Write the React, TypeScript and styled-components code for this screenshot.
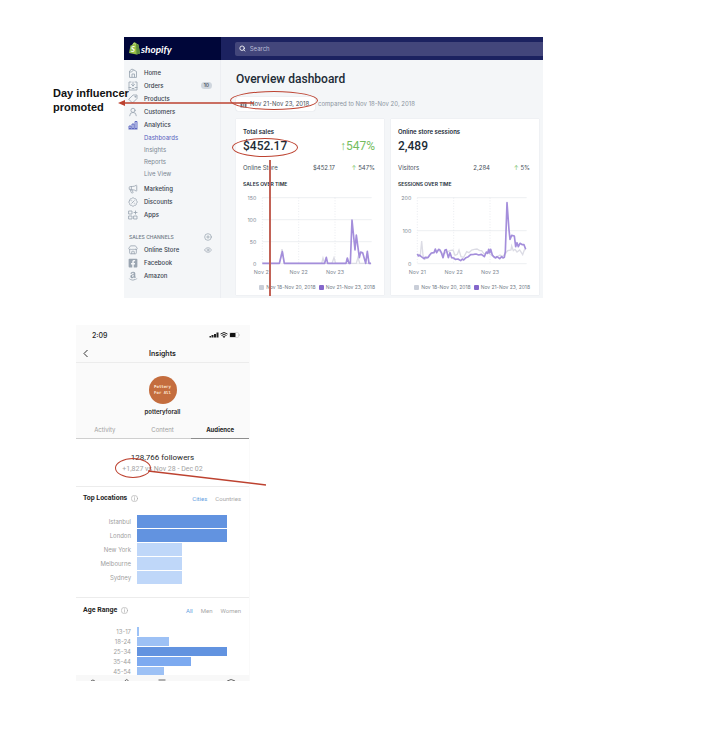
import React from "react";
import styled, { createGlobalStyle } from "styled-components";
import { BadgePercent, CirclePlus, Eye, Megaphone, Search, Store, UserRound } from "lucide-react";
import { FaAmazon, FaFacebookSquare } from "react-icons/fa";

const GlobalStyle = createGlobalStyle`
  *, *::before, *::after { box-sizing: border-box; }
  body { margin: 0; background: #fff; font-family: Inter, "Liberation Sans", sans-serif; }
  button, input { font: inherit; color: inherit; border: 0; background: none; padding: 0; margin: 0; }
  a { color: inherit; text-decoration: none; }
  h1, h2, h3, p, ul { margin: 0; padding: 0; list-style: none; font: inherit; }
`;

const RED = "#bd4230";
const DISPLAY = `Roboto, "Liberation Sans", sans-serif`;

const Page = styled.main`
  display: flex;
  flex-direction: column;
  gap: 27px;
  padding: 37px 0 53px;
`;

const Columns = styled.div<{ $cols: string }>`
  display: grid;
  grid-template-columns: ${(p) => p.$cols};
  align-items: start;
`;

const Callout = styled.p`
  position: relative;
  z-index: 2;
  padding: 49px 0 0 53px;
  font: 700 11px/14px "Liberation Sans", Arial, sans-serif;
  color: #111;
  white-space: nowrap;
`;

/* ---------- annotations ---------- */
const Ring = styled.span<{ $x: number; $y: number; $w: number; $h: number }>`
  position: absolute;
  left: ${(p) => p.$x}px;
  top: ${(p) => p.$y}px;
  width: ${(p) => p.$w}px;
  height: ${(p) => p.$h}px;
  border: 1px solid ${RED};
  border-radius: 50%;
  pointer-events: none;
`;

const Arrow = styled.svg`
  position: absolute;
  left: -118px;
  top: 3px;
  width: 136px;
  height: 6px;
  z-index: 2;
  pointer-events: none;
`;

const DropLine = styled.span`
  position: absolute;
  left: 33px;
  top: 41px;
  bottom: -1px;
  width: 2px;
  background: #c26256;
`;

const Pointer = styled.svg`
  position: absolute;
  left: 26px;
  top: 6px;
  width: 120px;
  height: 18px;
  pointer-events: none;
`;

/* ---------- store admin ---------- */
const Admin = styled.section`
  display: grid;
  grid-template-columns: 97px minmax(0, 1fr);
  background: #f4f6f8;
  color: #212b36;
`;

const Brand = styled.a`
  display: flex;
  align-items: center;
  gap: 1px;
  height: 23px;
  padding-left: 5px;
  background: #000639;
  color: #fff;
  font: italic 700 10px/12px Lato, sans-serif;
`;

const TopBar = styled.header`
  display: flex;
  align-items: center;
  height: 23px;
  padding-left: 14px;
  background: #1c2260;
`;

const SearchBox = styled.label`
  display: flex;
  flex: 1;
  align-items: center;
  gap: 4px;
  height: 14px;
  padding-left: 4px;
  border-radius: 2px 0 0 2px;
  background: #43467b;
  color: #fff;
  font-size: 6px;
  input { width: 100%; outline: 0; }
  input::placeholder { color: #b9bcd6; opacity: 1; }
`;

const Sidebar = styled.nav`
  display: flex;
  flex-direction: column;
  padding: 6px 8px 16px 4px;
  border-right: 1px solid #eceef2;
`;

const NavItem = styled.a`
  display: flex;
  align-items: center;
  gap: 6px;
  height: 13px;
  font-size: 6px;
  font-weight: 500;
  color: #39434e;
  svg { width: 10px; height: 10px; color: #9aa5b1; flex: none; }
`;

const NavEnd = styled.span`
  display: flex;
  margin-left: auto;
  && svg { width: 8px; height: 8px; }
`;

const Count = styled.span`
  margin-left: auto;
  padding: 0 3px;
  border-radius: 4px;
  background: #cfd6de;
  font-size: 5px;
  line-height: 7px;
`;

const SubNav = styled.div`
  display: flex;
  flex-direction: column;
  padding: 1px 0 2px 16px;
`;

const SubItem = styled.a<{ $active?: boolean }>`
  font-size: 6px;
  line-height: 12px;
  color: ${(p) => (p.$active ? "#5560bd" : "#7a8591")};
`;

const NavHeading = styled.div`
  display: flex;
  align-items: center;
  height: 13px;
  margin-top: 9px;
  padding-left: 1px;
  font-size: 5px;
  font-weight: 500;
  color: #6d7884;
  svg { color: #919eab; }
`;

const Body = styled.div`
  display: flex;
  flex-direction: column;
  padding: 11px 4px 1px 15px;
`;

const Title = styled.h1`
  font: 500 12px/16px ${DISPLAY};
`;

const DateRow = styled.div`
  position: relative;
  display: flex;
  align-items: center;
  gap: 3px;
  margin: 10px 0 8px;
  font-size: 6px;
  line-height: 14px;
  color: #8b95a0;
  white-space: nowrap;
`;

const DateButton = styled.button`
  display: flex;
  align-items: center;
  gap: 3px;
  width: 79px;
  height: 14px;
  padding-left: 4px;
  border-radius: 2px;
  background: #fff;
  box-shadow: 0 0 1px #b9c2cc;
  color: #46505b;
  svg { width: 7px; height: 7px; }
`;

const Cards = styled.div`
  display: grid;
  grid-template-columns: repeat(2, minmax(0, 1fr));
  gap: 7px;
`;

const Card = styled.article`
  position: relative;
  padding: 8px 9px 4px 7px;
  background: #fff;
  box-shadow: 0 0 1px #d5dbe2;
`;

const CardTitle = styled.h2`
  font-size: 6px;
  line-height: 10px;
  font-weight: 600;
`;

const Headline = styled.div`
  display: flex;
  justify-content: space-between;
  align-items: center;
  height: 19px;
  font: 500 12px/19px ${DISPLAY};
`;

const Growth = styled.span`
  font-weight: 400;
  color: #74bd5e;
`;

const Breakdown = styled.table`
  width: 100%;
  margin-top: 7px;
  border-collapse: collapse;
  font-size: 6px;
  line-height: 10px;
  color: #46505b;
  th, td { padding: 0; font-weight: 400; text-align: right; }
  th { text-align: left; }
  td:last-child { width: 40px; }
  i { font-style: normal; color: #74bd5e; }
`;

const ChartTitle = styled.h3`
  margin: 7px 0 6px;
  font-size: 5px;
  line-height: 8px;
  font-weight: 600;
`;

const ChartSvg = styled.svg`
  display: block;
  width: 100%;
  overflow: visible;
  text { font-size: 16px; fill: #7f8994; }
`;

const Legend = styled.div`
  display: flex;
  justify-content: flex-end;
  gap: 3px;
  margin-top: 5px;
  font-size: 5px;
  line-height: 8px;
  color: #737d88;
  white-space: nowrap;
`;

const Key = styled.span<{ $color: string }>`
  display: flex;
  align-items: center;
  gap: 2px;
  &::before { content: ""; width: 5px; height: 5px; border-radius: 1px; background: ${(p) => p.$color}; }
`;

/* ---------- phone ---------- */
const Phone = styled.section`
  color: #262626;
  border-right: 1px solid #fafafa;
`;

const PhoneTop = styled.header`
  background: #fafafa;
`;

const StatusBar = styled.div`
  display: flex;
  align-items: center;
  justify-content: space-between;
  height: 20px;
  padding: 0 9px 0 16px;
  font-size: 7px;
  font-weight: 500;
  svg { width: 31px; height: 8px; }
`;

const NavBar = styled.div`
  display: grid;
  grid-template-columns: 20px 1fr 20px;
  align-items: center;
  height: 18px;
  padding: 0 6px;
  border-bottom: 1px solid #ececec;
  font-size: 7px;
  font-weight: 600;
  text-align: center;
  button { display: flex; }
  svg { width: 7px; height: 9px; }
`;

const Profile = styled.div`
  display: flex;
  flex-direction: column;
  align-items: center;
  gap: 3px;
  padding-top: 13px;
  font-size: 6px;
  line-height: 10px;
  font-weight: 600;
`;

const Avatar = styled.div`
  display: flex;
  align-items: center;
  justify-content: center;
  width: 28px;
  height: 28px;
  border-radius: 50%;
  background: #c46d3e;
  color: #ffe9d6;
  font: 700 4px/6px "DejaVu Sans Mono", monospace;
  text-align: center;
`;

const Tabs = styled.div`
  display: grid;
  grid-template-columns: repeat(3, 1fr);
`;

const Tab = styled.button<{ $active?: boolean }>`
  height: 22px;
  padding-top: 3px;
  border-bottom: 1px solid ${(p) => (p.$active ? "#8d8d8d" : "#cfcfcf")};
  font-size: 6px;
  font-weight: ${(p) => (p.$active ? 700 : 400)};
  color: ${(p) => (p.$active ? "#262626" : "#a0a0a0")};
`;

const Followers = styled.div`
  display: flex;
  flex-direction: column;
  align-items: center;
  padding: 13px 0 12px;
  border-bottom: 1px solid #ececec;
  font: 400 8px/12px ${DISPLAY};
`;

const Change = styled.p`
  position: relative;
  font-size: 7px;
  line-height: 10px;
  color: #a3a3a3;
`;

const Panel = styled.section<{ $last?: boolean }>`
  padding: ${(p) => (p.$last ? "7px 0 0" : "6px 0 12px")};
  border-bottom: ${(p) => (p.$last ? "0" : "1px solid #ececec")};
`;

const PanelHead = styled.div`
  display: flex;
  align-items: center;
  gap: 4px;
  height: 10px;
  padding: 0 8px 0 7px;
  h2 { font: 700 7px/10px ${DISPLAY}; }
  > svg { width: 7px; height: 7px; color: #a6a6a6; }
`;

const Filters = styled.div`
  display: flex;
  gap: 8px;
  margin-left: auto;
  font-family: ${DISPLAY};
`;

const Filter = styled.button<{ $active?: boolean }>`
  font-size: 6px;
  color: ${(p) => (p.$active ? "#5f9fdf" : "#a8a8a8")};
`;

const Bars = styled.ul<{ $row: number; $max?: number }>`
  margin-top: 12px;
  max-height: ${(p) => (p.$max ? `${p.$max}px` : "none")};
  overflow: hidden;
  li {
    display: grid;
    grid-template-columns: 55px minmax(0, 1fr);
    gap: 6px;
    height: ${(p) => p.$row}px;
    padding: 0 22px 1px 0;
    align-items: center;
    font-size: 6px;
    line-height: 6px;
    color: #a0a0a0;
    text-align: right;
  }
`;

const Bar = styled.span<{ $w: number; $tone: string }>`
  height: 100%;
  width: ${(p) => p.$w}%;
  background: ${(p) => p.$tone};
`;

const TabStrip = styled.svg`
  display: block;
  width: 100%;
  height: 6px;
  background: #f8f8f8;
`;

/* ---------- icons ---------- */
const Line = ({ children }: { children: React.ReactNode }) => (
  <svg viewBox="0 0 20 20" fill="none" stroke="currentColor" strokeWidth="1.7" strokeLinejoin="round" strokeLinecap="round">
    {children}
  </svg>
);
const HomeIcon = () => (
  <Line><path d="M3 18V6l5-4 9 5v11zM3 8h4l4-4M8 18v-6h5v6" /></Line>
);
const OrdersIcon = () => (
  <Line><path d="M6 2H2v16h16V2h-4M10 2v8M7 7l3 3 3-3M2 13h4l2 2h4l2-2h4" /></Line>
);
const ProductsIcon = () => (
  <Line><path d="M11 2h7v7l-9 9-7-7z" /><circle cx="14.500" cy="5.500" r="1" /></Line>
);
const AnalyticsIcon = () => (
  <svg viewBox="0 0 20 20" fill="#dfe3f8" stroke="#5560bd" strokeWidth="1.8" strokeLinejoin="round">
    <path d="M2 12h4v5H2zM8 8h4v9H8zM14 3h4v14h-4zM1 18h18" />
  </svg>
);
const AppsIcon = () => (
  <Line><path d="M2 2h6v6H2zM2 12h6v6H2zM12 12h6v6h-6zM15 2v6M12 5h6" /></Line>
);
const CalendarIcon = () => (
  <svg viewBox="0 0 14 14"><path d="M1 2h12v11H1z" fill="#6b7580" /><path d="M1 5h12M4 8h6M4 11h6M5 5v8M9 5v8" stroke="#fff" /></svg>
);
const InfoIcon = () => (
  <Line><circle cx="10" cy="10" r="9" /><path d="M10 9v6M10 5v1" /></Line>
);
const ShopifyBag = () => (
  <svg width="11" height="13" viewBox="0 0 22 26">
    <path d="M3 7l4-1c1-4 3-6 5-5l2 1 2 2 3 1 3 18-7 2L0 22z" fill="#95bf47" />
    <path d="M14 3l2 2 3 1 3 17-7 2z" fill="#5e8e3e" />
    <path d="M7 6c1-3 3-4 5-3l1 2" fill="none" stroke="#d9ebb7" />
    <text x="4" y="20" fontSize="15" fontWeight="700" fill="#fff">S</text>
  </svg>
);

/* ---------- charts ---------- */
type Series = number[][];
const join = (s: Series) => s.map((p) => p.join(",")).join(" ");

const salesNow: Series = [[58,208],[109,208],[118,173],[124,208],[245,208],[250,190],[254,208],[309,208],[313,192],[318,208],[322,208],[327,78],[336,168],[340,123],[349,191],[353,174],[359,176],[368,208],[373,172],[378,208],[384,208]];
const salesBefore: Series = [[58,208],[110,208],[117,165],[124,208],[236,208],[240,192],[245,208],[267,208],[273,191],[278,208],[340,208],[345,190],[350,208],[384,208]];
const visitsNow: Series = [[58,180],[61,186],[65,184],[70,188],[78,194],[82,190],[90,191],[95,183],[100,177],[108,176],[112,165],[116,176],[122,166],[126,168],[130,176],[135,191],[141,168],[145,167],[151,191],[156,176],[161,191],[167,192],[172,196],[180,195],[188,200],[193,195],[197,198],[204,191],[211,188],[218,182],[227,181],[234,180],[242,183],[250,181],[259,188],[265,174],[269,178],[272,166],[275,176],[278,166],[283,183],[288,189],[293,192],[297,188],[305,194],[311,188],[315,192],[319,190],[322,173],[327,26],[333,108],[336,136],[341,124],[349,126],[353,158],[357,146],[361,158],[366,148],[373,152],[378,152],[383,166]];
const visitsBefore: Series = [[58,180],[67,184],[71,141],[75,184],[80,196],[90,190],[101,178],[121,168],[135,180],[156,170],[165,168],[171,184],[178,181],[183,168],[189,188],[197,190],[206,173],[213,176],[221,168],[229,166],[237,165],[245,170],[251,170],[258,180],[271,176],[283,186],[295,190],[306,183],[313,188],[323,178],[329,170],[339,168],[341,156],[346,170],[351,166],[357,174],[365,168],[374,182],[379,168],[383,166]];

function Chart({ ticks, now, before, label }: { ticks: string[]; now: Series; before: Series; label: string }) {
  const step = 198 / (ticks.length - 1);
  return (
    <ChartSvg viewBox="0 0 396 252" role="img" aria-label={label}>
      {ticks.map((t, i) => (
        <g key={t}>
          <path d={`M58 ${11 + i * step}H386`} stroke="#e4e7eb" strokeWidth="2" />
          <text x="40" y={17 + i * step} textAnchor="end">{t}</text>
        </g>
      ))}
      {["Nov 21", "Nov 22", "Nov 23"].map((t, i) => (
        <g key={t}>
          <path d={`M${58 + i * 109} 11V209`} stroke="#dfe3e8" strokeWidth="2" strokeDasharray="3 5" />
          <text x={58 + i * 109} y="241" textAnchor="middle">{t}</text>
        </g>
      ))}
      <polyline points={join(before)} fill="none" stroke="#dcdce5" strokeWidth="4" />
      <polyline points={join(now)} fill="none" stroke="#a48edb" strokeWidth="5" strokeLinejoin="round" />
    </ChartSvg>
  );
}

const ChartLegend = () => (
  <Legend>
    <Key $color="#c9ced8">Nov 18-Nov 20, 2018</Key>
    <Key $color="#8467cb">Nov 21-Nov 23, 2018</Key>
  </Legend>
);

const locations = [["Istanbul", 100], ["London", 100], ["New York", 50], ["Melbourne", 50], ["Sydney", 50]] as const;
const ages = [["13-17", 2, "#9dc3f7"], ["18-24", 35, "#9dc1f5"], ["25-34", 100, "#6293e0"], ["35-44", 60, "#7daaf0"], ["45-54", 30, "#9dc1f5"]] as const;

function StoreAdmin() {
  return (
    <Admin>
      <Brand href="#"><ShopifyBag />shopify</Brand>
      <TopBar>
        <SearchBox><Search size={7} strokeWidth={3} /><input aria-label="Search" placeholder="Search" /></SearchBox>
      </TopBar>
      <Sidebar>
        <NavItem href="#"><HomeIcon />Home</NavItem>
        <NavItem href="#"><OrdersIcon />Orders<Count>10</Count></NavItem>
        <NavItem href="#"><ProductsIcon />Products</NavItem>
        <NavItem href="#"><UserRound />Customers</NavItem>
        <NavItem href="#"><AnalyticsIcon />Analytics</NavItem>
        <SubNav>
          <SubItem href="#" $active>Dashboards</SubItem>
          <SubItem href="#">Insights</SubItem>
          <SubItem href="#">Reports</SubItem>
          <SubItem href="#">Live View</SubItem>
        </SubNav>
        <NavItem href="#"><Megaphone />Marketing</NavItem>
        <NavItem href="#"><BadgePercent />Discounts</NavItem>
        <NavItem href="#"><AppsIcon />Apps</NavItem>
        <NavHeading>SALES CHANNELS<NavEnd><CirclePlus /></NavEnd></NavHeading>
        <NavItem href="#"><Store />Online Store<NavEnd><Eye /></NavEnd></NavItem>
        <NavItem href="#"><FaFacebookSquare />Facebook</NavItem>
        <NavItem href="#"><FaAmazon />Amazon</NavItem>
      </Sidebar>
      <Body>
        <Title>Overview dashboard</Title>
        <DateRow>
          <DateButton><CalendarIcon />Nov 21-Nov 23, 2018</DateButton>
          compared to Nov 18-Nov 20, 2018
          <Ring $x={-6} $y={-6} $w={88} $h={19} />
          <Arrow viewBox="0 0 136 6">
            <path d="M5 3H136" stroke={RED} strokeWidth="1.500" />
            <path d="M0 3L7 0V6z" fill={RED} />
          </Arrow>
        </DateRow>
        <Cards>
          <Card>
            <CardTitle>Total sales</CardTitle>
            <Headline>$452.17<Growth>↑547%</Growth></Headline>
            <Breakdown><tbody><tr><th scope="row">Online Store</th><td>$452.17</td><td><i>↑</i> 547%</td></tr></tbody></Breakdown>
            <ChartTitle>SALES OVER TIME</ChartTitle>
            <Chart label="Sales over time" ticks={["150", "100", "50", "0"]} now={salesNow} before={salesBefore} />
            <ChartLegend />
            <Ring $x={-4} $y={19} $w={66} $h={19} />
            <DropLine />
          </Card>
          <Card>
            <CardTitle>Online store sessions</CardTitle>
            <Headline>2,489</Headline>
            <Breakdown><tbody><tr><th scope="row">Visitors</th><td>2,284</td><td><i>↑</i> 5%</td></tr></tbody></Breakdown>
            <ChartTitle>SESSIONS OVER TIME</ChartTitle>
            <Chart label="Sessions over time" ticks={["200", "100", "0"]} now={visitsNow} before={visitsBefore} />
            <ChartLegend />
          </Card>
        </Cards>
      </Body>
    </Admin>
  );
}

function PhoneInsights() {
  return (
    <Phone>
      <PhoneTop>
        <StatusBar>
          2:09
          <svg viewBox="0 0 62 16">
            <path d="M1 10h3v3H1zM5 8h4v5H5zM10 6h4v7h-4zM15 3h4v10h-4z" fill="#222" />
            <path d="M23 6q7-6 14 0M25 9q5-4 10 0" fill="none" stroke="#222" strokeWidth="2" />
            <path d="M27 11q3-2 6 0l-3 3z" fill="#222" />
            <rect x="41" y="3" width="18" height="10" rx="2" fill="none" stroke="#bbb" />
            <rect x="42" y="4" width="11" height="8" rx="1" fill="#111" />
            <path d="M61 6v4" stroke="#bbb" />
          </svg>
        </StatusBar>
        <NavBar>
          <button aria-label="Back"><svg viewBox="0 0 14 18"><path d="M11 2L4 9l7 7" fill="none" stroke="#333" strokeWidth="2" /></svg></button>
          <h1>Insights</h1>
        </NavBar>
        <Profile>
          <Avatar>Pottery<br />For All</Avatar>
          potteryforall
        </Profile>
        <Tabs>
          <Tab>Activity</Tab>
          <Tab>Content</Tab>
          <Tab $active>Audience</Tab>
        </Tabs>
      </PhoneTop>
      <Followers>
        <p>128,766 followers</p>
        <Change>
          +1,827 vs Nov 28 - Dec 02
          <Ring $x={-7} $y={-6} $w={36} $h={20} />
          <Pointer viewBox="0 0 120 18">
            <path d="M0 1L118 15" stroke={RED} strokeWidth="1.500" />
          </Pointer>
        </Change>
      </Followers>
      <Panel>
        <PanelHead>
          <h2>Top Locations</h2><InfoIcon />
          <Filters><Filter $active>Cities</Filter><Filter>Countries</Filter></Filters>
        </PanelHead>
        <Bars $row={14}>
          {locations.map(([name, w]) => (
            <li key={name}>{name}<Bar $w={w} $tone={w === 100 ? "#6293e0" : "#bfd7f9"} /></li>
          ))}
        </Bars>
      </Panel>
      <Panel $last>
        <PanelHead>
          <h2>Age Range</h2><InfoIcon />
          <Filters><Filter $active>All</Filter><Filter>Men</Filter><Filter>Women</Filter></Filters>
        </PanelHead>
        <Bars $row={10} $max={48}>
          {ages.map(([name, w, tone]) => (
            <li key={name}>{name}<Bar $w={w} $tone={tone} /></li>
          ))}
        </Bars>
      </Panel>
      <TabStrip viewBox="0 0 174 6" preserveAspectRatio="none">
        <path d="M15 6l2-1 2 1M49 6q2-3 4 0M83 5h7M152 6q4-3 8 0" fill="none" stroke="#666" />
      </TabStrip>
    </Phone>
  );
}

export default function App() {
  return (
    <>
      <GlobalStyle />
      <Page>
        <Columns $cols="minmax(0, 124fr) minmax(0, 419fr) minmax(0, 160fr)">
          <Callout>Day influencer<br />promoted</Callout>
          <StoreAdmin />
        </Columns>
        <Columns $cols="minmax(0, 76fr) minmax(0, 174fr) minmax(0, 453fr)">
          <span />
          <PhoneInsights />
        </Columns>
      </Page>
    </>
  );
}
